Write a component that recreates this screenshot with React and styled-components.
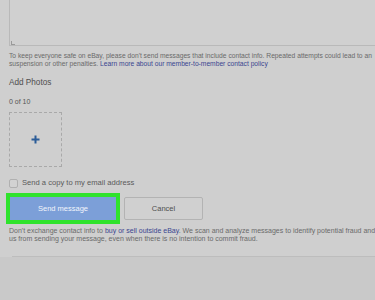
import React from "react";
import styled, { createGlobalStyle } from "styled-components";

const Global = createGlobalStyle`
  html, body { margin: 0; padding: 0; background: #cfcfcf; overflow: hidden; }
  body { font-family: "Liberation Sans", Arial, sans-serif; }
`;

const Page = styled.div`
  width: 375px;
  height: 300px;
  overflow: hidden;
  background: #cfcfcf;
  display: flex;
  flex-direction: column;
`;

const Form = styled.div`
  width: 430px;
  padding-left: 9px;
  display: flex;
  flex-direction: column;
  align-items: flex-start;
`;

const TextArea = styled.div`
  position: relative;
  width: 420px;
  height: 46px;
  box-sizing: border-box;
  border: 1px solid #b9b9b9;
  border-top: none;
  background: #d0d0d0;
`;

const Grip = styled.span`
  position: absolute;
  left: 1px;
  bottom: 0px;
  width: 3px;
  height: 3px;
  border-left: 1px solid #9a9a9a;
  border-bottom: 1px solid #9a9a9a;
`;

const Note = styled.p`
  margin: ${(p) => p.$mt || 0}px 0 0;
  font-size: ${(p) => p.$size || 7}px;
  line-height: 8px;
  color: #6a6a6a;
  white-space: nowrap;
`;

const Link = styled.a`
  color: #3a4590;
  text-decoration: none;
`;

const Heading = styled.div`
  margin-top: 10px;
  font-size: 8.2px;
  line-height: 10px;
  color: #4e4e4e;
`;

const Count = styled.div`
  margin-top: 9px;
  font-size: 7px;
  line-height: 9px;
  color: #555;
`;

const PhotoBox = styled.div`
  margin-top: 6px;
  width: 53px;
  height: 55px;
  box-sizing: border-box;
  border: 1px dashed #a9a9a9;
  display: flex;
  align-items: center;
  justify-content: center;
`;

const CheckRow = styled.label`
  margin-top: 11px;
  display: flex;
  align-items: center;
  gap: 4px;
  font-size: 7.6px;
  line-height: 10px;
  color: #5a5a5a;
`;

const CheckBox = styled.span`
  width: 9px;
  height: 9px;
  border: 1px solid #b0b0b0;
  border-radius: 2px;
  box-sizing: border-box;
  background: #d2d2d2;
`;

const Buttons = styled.div`
  margin-top: 9px;
  margin-left: 1px;
  display: flex;
  gap: 8px;
`;

const Button = styled.button`
  width: ${(p) => p.$w}px;
  height: 23px;
  box-sizing: border-box;
  font-family: "Liberation Sans", Arial, sans-serif;
  font-size: 7.5px;
  border-radius: ${(p) => (p.$primary ? 0 : 2)}px;
  padding: 0;
  cursor: pointer;
  background: ${(p) => (p.$primary ? "#7c9fd8" : "#d0d0d0")};
  color: ${(p) => (p.$primary ? "#f2f5fb" : "#4f4f4f")};
  border: 1px solid ${(p) => (p.$primary ? "#7c9fd8" : "#b3b3b3")};
  outline: ${(p) => (p.$highlight ? "4px solid #2fe32c" : "none")};
  outline-offset: 0;
`;

const Divider = styled.div`
  margin-top: 13px;
  margin-left: 12px;
  height: 1px;
  background: #bdbdbd;
`;

const Footer = styled.div`
  flex: 1;
  background: #c9c9c9;
`;

export default function App() {
  return (
    <>
      <Global />
      <Page>
        <Form>
          <TextArea>
            <Grip />
          </TextArea>
          <Note $mt={6} $size={6.7}>
            To keep everyone safe on eBay, please don't send messages that include contact info. Repeated attempts could lead to an
            <br />
            suspension or other penalties. <Link>Learn more about our member-to-member contact policy</Link>
          </Note>
          <Heading>Add Photos</Heading>
          <Count>0 of 10</Count>
          <PhotoBox>
            <svg width="9" height="9" viewBox="0 0 9 9">
              <path d="M4.5 0.5v8M0.5 4.5h8" stroke="#2b5c98" strokeWidth="2" />
            </svg>
          </PhotoBox>
          <CheckRow>
            <CheckBox />
            Send a copy to my email address
          </CheckRow>
          <Buttons>
            <Button $primary $highlight $w={106}>Send message</Button>
            <Button $w={79}>Cancel</Button>
          </Buttons>
          <Note $mt={7}>
            Don't exchange contact info to <Link>buy or sell outside eBay</Link>. We scan and analyze messages to identify potential fraud and <Link>policy violations. This may prevent</Link>
            <br />
            us from sending your message, even when there is no intention to commit fraud.
          </Note>
        </Form>
        <Divider />
        <Footer />
      </Page>
    </>
  );
}
